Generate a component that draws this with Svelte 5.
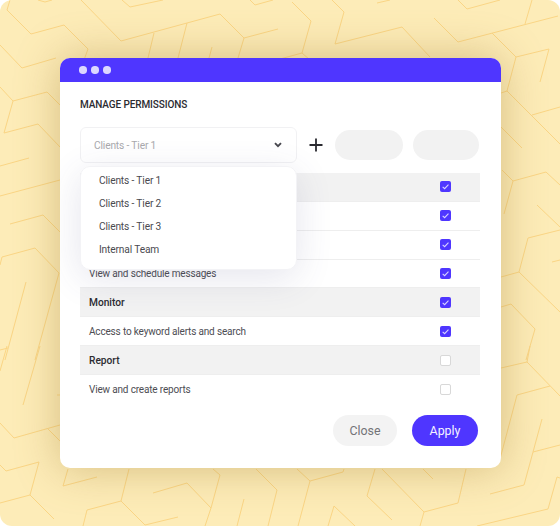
<script>
  const rows = [
    { label: '', head: true, on: true },
    { label: '', on: true },
    { label: '', on: true },
    { label: 'View and schedule messages', on: true },
    { label: 'Monitor', head: true, on: true },
    { label: 'Access to keyword alerts and search', on: true },
    { label: 'Report', head: true, on: false },
    { label: 'View and create reports', on: false }
  ];
  const options = ['Clients - Tier 1', 'Clients - Tier 2', 'Clients - Tier 3', 'Internal Team'];
  const lines = [
    '7,10 31,34 64,25 88,49 84,60', '7,10 10,0', '0,45 22,68 56,58',
    '81,0 121,41 220,14 244,38 278,29', '244,38 238,58', '154,33 148,58', '187,23 178,58', '212,47 209,58',
    '122,0 130,7 163,0', '38,0 45,2 52,0', '250,0 255,5 273,0',
    '0,87 13,101 47,92 60,105', '13,101 4,133 38,124 60,147', '0,166 29,158',
    '292,2 311,21 302,53 280,59', '302,53 310,60',
    '332,0 344,12 335,44 402,27 430,57', '377,3 390,0', '458,0 467,9 500,0', '532,0 525,24',
    '434,18 458,42 558,16', '492,33 516,57 549,49 540,82', '516,57 507,91 501,93', '507,91 560,144',
    '532,115 560,107', '501,127 522,148',
    '502,170 513,181 546,172 560,185', '513,181 504,214', '537,205 560,227',
    '560,230 528,238 519,272 501,277', '519,272 560,312', '552,262 560,260',
    '501,307 511,304 535,329 526,360',
    '0,196 60,180', '10,224 43,215 60,232', '0,265 2,257 35,248 59,273 35,360', '26,282 5,360', '0,350 8,348',
    '40,346 23,405', '7,346 0,371', '57,395 60,395',
    '0,423 14,438 60,425', '48,429 60,441',
    '0,465 6,471 39,462 30,495 0,503', '30,495 54,519',
    '68,469 63,486 97,477', '129,469 121,501 87,510 83,526', '121,501 145,525 178,517',
    '153,493 187,483 211,508 205,526', '213,469 220,475 211,508', '244,499 237,526', '256,469 277,490 268,526',
    '297,469 310,481 343,472 344,469', '310,481 298,526', '375,469 367,496 392,520',
    '382,469 424,512 458,503 466,469', '424,512 420,526', '423,469 433,479',
    '334,506 328,526', '334,506 355,526',
    '490,494 524,485 542,419', '533,452 560,445', '517,395 550,386', '530,346 527,362 501,368',
    '527,362 560,396', '517,395 500,459', '560,478 557,477 548,509 477,526'
  ];
</script>

<div class="page">
  <svg class="pattern" viewBox="0 0 560 526" aria-hidden="true">
    {#each lines as points}
      <polyline {points} />
    {/each}
  </svg>

  <section class="window">
    <header class="titlebar">
      <span class="dot"></span><span class="dot"></span><span class="dot"></span>
    </header>

    <div class="body">
      <h1>MANAGE PERMISSIONS</h1>

      <div class="toolbar">
        <div class="select-wrap">
          <div class="select">
            <span>Clients - Tier 1</span>
            <svg class="chevron" viewBox="0 0 8 6" aria-hidden="true"><path d="M1 1.2 4 4.2 7 1.2" /></svg>
          </div>
          <ul class="menu">
            {#each options as option}
              <li>{option}</li>
            {/each}
          </ul>
        </div>
        <svg class="plus" viewBox="0 0 14 14" aria-hidden="true"><path d="M7 0.5V13.5M0.5 7H13.5" /></svg>
        <span class="pill first"></span>
        <span class="pill second"></span>
      </div>

      <div class="table">
        {#each rows as row}
          <div class="row" class:head={row.head}>
            <span>{row.label}</span>
            <span class="check" class:on={row.on}>
              {#if row.on}
                <svg viewBox="0 0 10 10" aria-hidden="true"><path d="M2.4 5.3 4.2 7 7.7 3.3" /></svg>
              {/if}
            </span>
          </div>
        {/each}
      </div>

      <div class="actions">
        <button class="close">Close</button>
        <button class="apply">Apply</button>
      </div>
    </div>
  </section>
</div>

<style>
  :global(body) {
    margin: 0;
    background: #fff;
  }
  .page {
    position: relative;
    box-sizing: border-box;
    width: 560px;
    height: 526px;
    padding: 58px 59px 58px 60px;
    background: #fdecb8;
    border-radius: 12px;
    overflow: hidden;
    font-family: Roboto, "Noto Sans", sans-serif;
  }
  .pattern {
    position: absolute;
    inset: 0;
    width: 560px;
    height: 526px;
  }
  .pattern polyline {
    fill: none;
    stroke: #fad585;
    stroke-width: 1;
  }
  .window {
    position: relative;
    height: 410px;
    background: #fff;
    border-radius: 10px;
    overflow: hidden;
    box-shadow: 0 0 44px rgba(160, 125, 50, 0.42);
  }
  .titlebar {
    display: flex;
    align-items: center;
    gap: 4.5px;
    height: 24px;
    padding-left: 19px;
    background: #4f36ff;
  }
  .dot {
    width: 7.5px;
    height: 7.5px;
    border-radius: 50%;
    background: #dcd7ff;
  }
  .body {
    padding: 0 21px 0 20px;
  }
  h1 {
    margin: 0;
    padding-top: 15px;
    height: 30px;
    font-size: 10px;
    line-height: 15px;
    font-weight: 500;
    letter-spacing: -0.1px;
    color: #2b2b30;
  }
  .toolbar {
    display: flex;
    align-items: center;
    height: 36px;
  }
  .select-wrap {
    position: relative;
    width: 217px;
    height: 36px;
  }
  .select {
    box-sizing: border-box;
    display: flex;
    align-items: center;
    justify-content: space-between;
    height: 100%;
    padding: 0 14px 0 13px;
    border: 1px solid #f1f1f3;
    border-radius: 6px;
    background: #fff;
    font-size: 10.2px;
    letter-spacing: -0.15px;
    color: #a9a9ad;
  }
  .chevron {
    width: 8px;
    height: 6px;
  }
  .chevron path {
    fill: none;
    stroke: #48484f;
    stroke-width: 1.9;
  }
  .menu {
    position: absolute;
    z-index: 2;
    top: 39px;
    left: 0;
    box-sizing: border-box;
    width: 217px;
    height: 104px;
    margin: 0;
    padding: 2px 0 0 18px;
    list-style: none;
    background: #fff;
    border: 1px solid #f3f3f6;
    border-radius: 10px;
    box-shadow: 0 8px 36px rgba(70, 70, 130, 0.14);
    font-size: 10.2px;
    letter-spacing: -0.15px;
    color: #4a4a50;
  }
  .menu li {
    height: 23px;
    line-height: 23px;
  }
  .plus {
    width: 14px;
    height: 14px;
    margin-left: 12px;
  }
  .plus path {
    fill: none;
    stroke: #2a2a30;
    stroke-width: 1.8;
  }
  .pill {
    height: 30px;
    border-radius: 15px;
    background: #f2f2f2;
  }
  .pill.first {
    width: 68px;
    margin-left: 12px;
  }
  .pill.second {
    width: 66px;
    margin-left: 10px;
  }
  .table {
    margin-top: 10px;
    width: 400px;
  }
  .row {
    box-sizing: border-box;
    display: flex;
    align-items: center;
    justify-content: space-between;
    height: 28.86px;
    padding: 0 29px 0 9px;
    border-bottom: 1px solid #eeeeee;
    font-size: 10px;
    letter-spacing: -0.17px;
    color: #4d4d53;
  }
  .row:last-child {
    border-bottom: 0;
  }
  .row.head {
    background: #f2f2f2;
    font-size: 10.2px;
    letter-spacing: 0;
    font-weight: 500;
    color: #2b2b30;
  }
  .check {
    box-sizing: border-box;
    width: 11px;
    height: 11px;
    border: 1.5px solid #d8d8d8;
    border-radius: 2px;
    background: #fff;
  }
  .check.on {
    border: 0;
    background: #4f36ff;
  }
  .check svg {
    display: block;
    width: 11px;
    height: 11px;
  }
  .check path {
    fill: none;
    stroke: #d8d3ff;
    stroke-width: 1;
  }
  .actions {
    display: flex;
    justify-content: flex-end;
    gap: 15px;
    margin-top: 11px;
    padding-right: 2px;
  }
  button {
    height: 31px;
    border: 0;
    border-radius: 16px;
    font-family: inherit;
    font-size: 12.4px;
    font-weight: 400;
    padding: 0;
  }
  .close {
    width: 64px;
    background: #f3f3f3;
    color: #737377;
  }
  .apply {
    width: 66px;
    background: #4f36ff;
    color: #f4f2ff;
  }
</style>
